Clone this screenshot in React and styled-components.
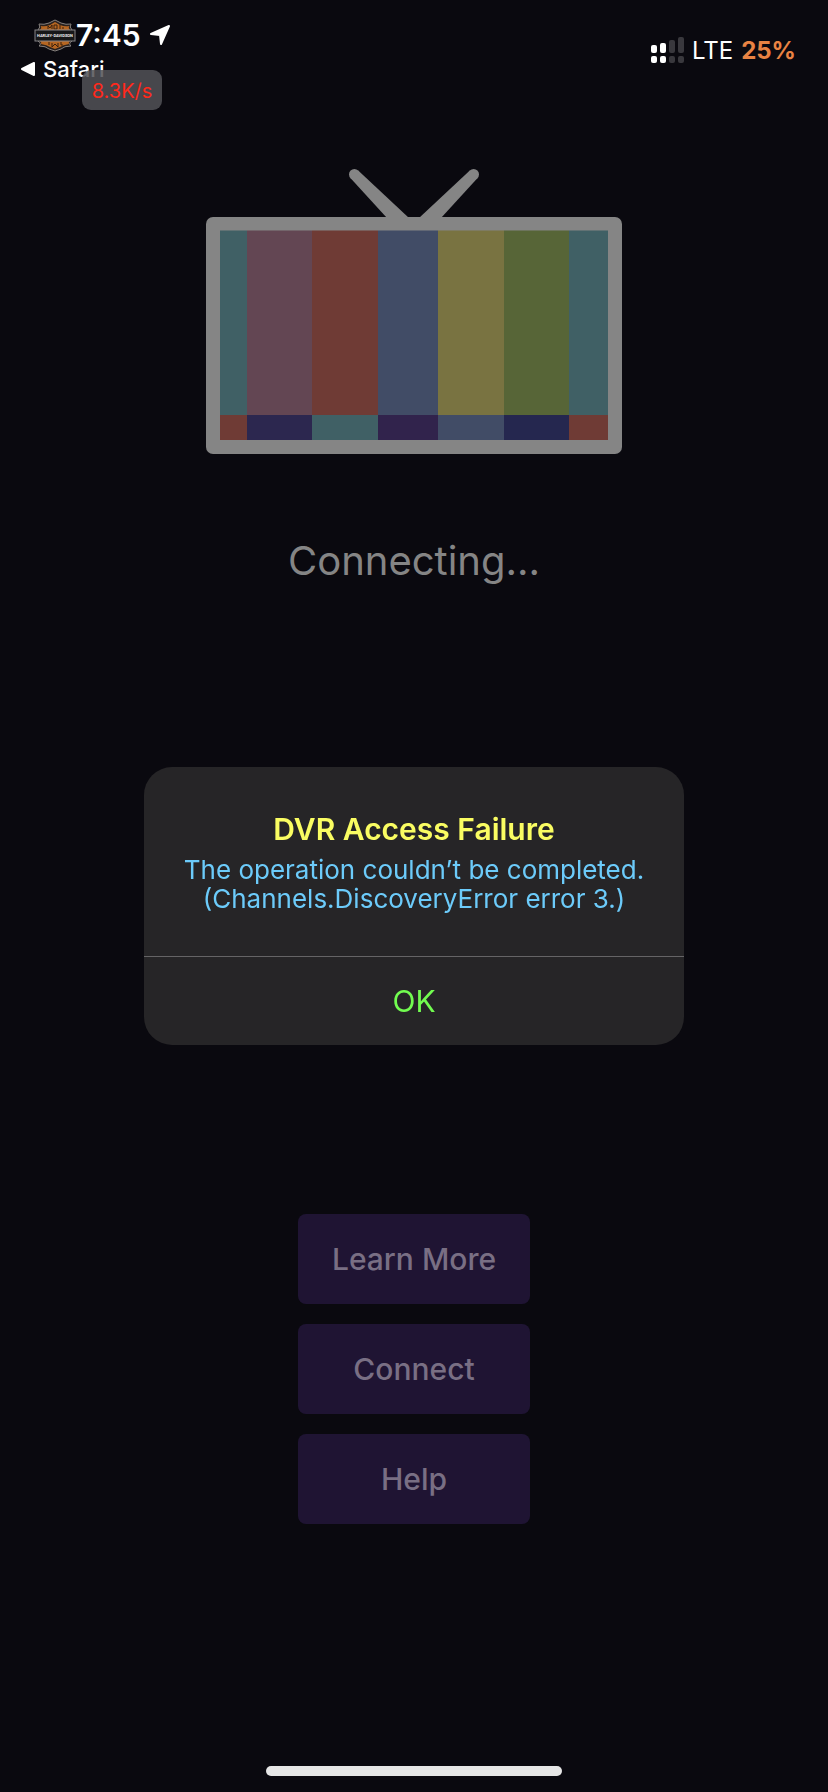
import React, { useState } from "react";
import styled, { createGlobalStyle } from "styled-components";

const GlobalStyle = createGlobalStyle`
  * {
    box-sizing: border-box;
  }
  body {
    margin: 0;
    background-color: #0a090f;
    font-family: Inter, "Liberation Sans", sans-serif;
  }
  h1, h2, p {
    margin: 0;
  }
  svg {
    display: block;
    flex-shrink: 0;
  }
`;

const Screen = styled.div`
  display: flex;
  flex-direction: column;
  min-height: 100vh;
  background-color: #0a090f;
`;

const StatusBar = styled.header`
  display: flex;
  justify-content: space-between;
  align-items: flex-start;
  padding: 15px 32px 0 20px;
  height: 120px;
  color: #fff;
`;

const StatusLeft = styled.div`
  position: relative;
`;

const TimeRow = styled.div`
  display: flex;
  align-items: center;
  gap: 8px;
  height: 40px;
  padding-left: 14px;
  font-size: 30px;
  font-weight: 600;
`;

const Clock = styled.div`
  display: flex;
  align-items: center;
`;

const BackLink = styled.a`
  display: flex;
  align-items: center;
  gap: 8px;
  height: 28px;
  color: #fff;
  font-size: 22px;
  font-weight: 500;
  text-decoration: none;
`;

const SpeedBadge = styled.div`
  position: absolute;
  top: 55px;
  left: 62px;
  width: 80px;
  height: 40px;
  border-radius: 9px;
  background-color: rgba(82, 81, 86, 0.86);
  color: #ff291b;
  font-size: 20px;
  line-height: 42px;
  text-align: center;
`;

const StatusRight = styled.div`
  display: flex;
  align-items: center;
  gap: 8px;
  height: 32px;
  margin-top: 19px;
  font-size: 24px;
`;

const Battery = styled.span`
  color: #e98343;
  font-weight: 700;
`;

const Main = styled.main`
  display: flex;
  flex: 1;
  flex-direction: column;
  align-items: center;
  padding: 49px 16px 40px;
`;

const Status = styled.h1`
  margin-top: 79px;
  color: #858585;
  font-size: 40px;
  font-weight: 400;
  line-height: 56px;
`;

const Actions = styled.div`
  display: flex;
  flex-direction: column;
  gap: 20px;
  width: 232px;
  margin-top: 625px;
`;

const ActionButton = styled.button`
  height: 90px;
  border: none;
  border-radius: 8px;
  background-color: #1f1433;
  color: #796f84;
  font-family: inherit;
  font-size: 30px;
  font-weight: 500;
  cursor: pointer;
`;

const HomeIndicator = styled.div`
  align-self: center;
  width: 296px;
  height: 10px;
  margin-bottom: 16px;
  border-radius: 5px;
  background-color: #e6e6e6;
`;

const Overlay = styled.div`
  position: fixed;
  inset: 0;
  display: flex;
  align-items: center;
  justify-content: center;
  padding: 20px 16px 0;
`;

const Alert = styled.div`
  width: 100%;
  max-width: 540px;
  border-radius: 28px;
  background-color: #262527;
  text-align: center;
  overflow: hidden;
`;

const AlertBody = styled.div`
  padding: 40px 32px 43px;
`;

const AlertTitle = styled.h2`
  color: #fafd62;
  font-size: 30px;
  font-weight: 600;
  line-height: 44px;
`;

const AlertText = styled.p`
  color: #6ccbfa;
  font-size: 26px;
  line-height: 29px;
  padding-top: 4px;
`;

const AlertButton = styled.button`
  width: 100%;
  height: 89px;
  border: none;
  border-top: 1px solid #656466;
  background: none;
  color: #72fc50;
  font-family: inherit;
  font-size: 30px;
  cursor: pointer;
`;

const Shield = () => (
  <svg width="42" height="33" viewBox="0 0 42 33" aria-hidden="true">
    <path
      d="M21 1 L27 4 Q32 6 37 5 Q35 8 38 11 V22 Q34 25 37 27 Q30 27 27 30 L21 32 L15 30 Q12 27 5 27 Q8 25 4 22 V11 Q7 8 5 5 Q10 6 15 4 Z"
      fill="#2a211d"
      stroke="#85807d"
    />
    <path
      d="M21 3 L26 6 Q31 8 35 7 Q34 9 36 11 H6 Q8 9 7 7 Q11 8 16 6 Z M6 22 H36 Q34 24 35 25 Q29 26 26 28 L21 30 L16 28 Q13 26 7 25 Q8 24 6 22 Z"
      fill="#b66621"
    />
    <path
      d="M14 10 V7 L16 9 L18 6 V10 M20 6 H23 V10 H20 Z M26 6 V10 M29 8 V10 M15 23 V26 M18 24 V28 L21 25 L24 28 V24 M27 23 V26 H29"
      fill="none"
      stroke="#38200f"
    />
    <rect x="1" y="11" width="40" height="11" fill="#171719" stroke="#858487" />
    <text
      x="21"
      y="18"
      fill="#f1f1f1"
      fontSize="4"
      fontWeight="700"
      fontFamily="Roboto, sans-serif"
      textAnchor="middle"
    >
      HARLEY-DAVIDSON
    </text>
  </svg>
);

const LocationArrow = () => (
  <svg width="22" height="22" viewBox="0 0 22 22" aria-hidden="true">
    <path
      d="M20 2 L12 20 L11 11 L2 10 Z"
      fill="#fff"
      stroke="#fff"
      strokeWidth="2"
      strokeLinejoin="round"
    />
  </svg>
);

const BackTriangle = () => (
  <svg width="15" height="14" viewBox="0 0 15 14" aria-hidden="true">
    <path
      d="M2 7 L14 1 V13 Z"
      fill="#fff"
      stroke="#fff"
      strokeWidth="2"
      strokeLinejoin="round"
    />
  </svg>
);

const signalBars = [
  { x: 0, top: 8, color: "#fff" },
  { x: 9, top: 6, color: "#fff" },
  { x: 18, top: 3, color: "#39383d" },
  { x: 27, top: 0, color: "#39383d" },
];

const Signal = () => (
  <svg width="33" height="26" viewBox="0 0 33 26" aria-hidden="true">
    {signalBars.map(({ x, top, color }) => (
      <g key={x} fill={color}>
        <rect x={x} y={top} width="6" height={16 - top} rx="2" />
        <rect x={x} y="19" width="6" height="7" rx="2" />
      </g>
    ))}
  </svg>
);

const stripes = [
  { x: 14, width: 27, color: "#406065", base: "#6f3b35" },
  { x: 41, width: 65, color: "#634653", base: "#2c274f" },
  { x: 106, width: 66, color: "#6f3b35", base: "#406065" },
  { x: 172, width: 60, color: "#414c66", base: "#31234c" },
  { x: 232, width: 66, color: "#797341", base: "#414c66" },
  { x: 298, width: 65, color: "#576537", base: "#25274f" },
  { x: 363, width: 39, color: "#406065", base: "#6f3b35" },
];

const Television = () => (
  <svg width="416" height="285" viewBox="0 0 416 285" aria-hidden="true">
    <g fill="#858585">
      <circle cx="148.4" cy="5.4" r="5.4" />
      <circle cx="267.6" cy="5.4" r="5.4" />
      <path d="M144.4 9 L181 49 H203 L152.2 1.5 Z" />
      <path d="M271.6 9 L235 49 H213 L263.8 1.5 Z" />
      <rect y="48" width="416" height="237" rx="7" />
    </g>
    {stripes.map(({ x, width, color, base }) => (
      <g key={x}>
        <rect x={x} y="61.5" width={width} height="184.5" fill={color} />
        <rect x={x} y="246" width={width} height="25" fill={base} />
      </g>
    ))}
  </svg>
);

const App = () => {
  const [alertOpen, setAlertOpen] = useState(true);

  return (
    <Screen>
      <GlobalStyle />
      <StatusBar>
        <StatusLeft>
          <TimeRow>
            <Clock>
              <Shield />
              <span>7:45</span>
            </Clock>
            <LocationArrow />
          </TimeRow>
          <BackLink href="#safari">
            <BackTriangle />
            Safari
          </BackLink>
          <SpeedBadge>8.3K/s</SpeedBadge>
        </StatusLeft>
        <StatusRight>
          <Signal />
          <span>LTE</span>
          <Battery>25%</Battery>
        </StatusRight>
      </StatusBar>
      <Main>
        <Television />
        <Status>Connecting...</Status>
        <Actions>
          <ActionButton>Learn More</ActionButton>
          <ActionButton>Connect</ActionButton>
          <ActionButton>Help</ActionButton>
        </Actions>
      </Main>
      <HomeIndicator />
      {alertOpen && (
        <Overlay>
          <Alert role="alertdialog" aria-labelledby="alert-title" aria-describedby="alert-text">
            <AlertBody>
              <AlertTitle id="alert-title">DVR Access Failure</AlertTitle>
              <AlertText id="alert-text">
                The operation couldn’t be completed. (Channels.DiscoveryError error 3.)
              </AlertText>
            </AlertBody>
            <AlertButton onClick={() => setAlertOpen(false)}>OK</AlertButton>
          </Alert>
        </Overlay>
      )}
    </Screen>
  );
};

export default App;
